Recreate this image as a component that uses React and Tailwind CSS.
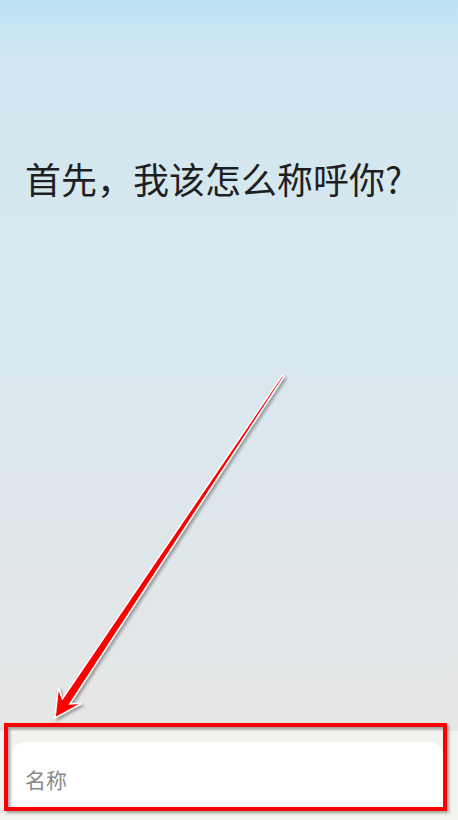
export default function App() {
  return (
    <div
      className="relative flex h-[820px] w-full flex-col overflow-hidden bg-[linear-gradient(180deg,#bce2f3_0%,#d2e7f0_8%,#d7e8ef_40%,#e0e6e9_70%,#e6e6e6_89%)]"
      style={{ fontFamily: '"Noto Sans CJK SC", "Noto Sans", sans-serif' }}
    >
      <div className="flex-1 px-[25px] pt-[150px]">
        <h1 className="text-[36px] font-normal leading-[56px] text-[#1f1f1f]">
          首先，我该怎么称呼你?
        </h1>
      </div>

      <div className="h-[89px] bg-[#f4f2ee] pl-3 pr-[15px] pt-[11px]">
        <div className="flex h-[66px] items-center rounded-t-[14px] bg-white px-[13px] pt-[10px]">
          <input
            type="text"
            placeholder="名称"
            className="w-full bg-transparent text-[21px] text-[#333] outline-none placeholder:text-[#8a8a8a]"
          />
        </div>
      </div>

      {/* annotation overlay: arrow + highlight box */}
      <svg
        className="pointer-events-none absolute inset-0"
        width="458"
        height="820"
        viewBox="0 0 458 820"
      >
        <defs>
          <filter id="shadow" x="-20%" y="-20%" width="140%" height="140%">
            <feDropShadow dx="2" dy="2" stdDeviation="1.5" floodColor="#000" floodOpacity="0.35" />
          </filter>
        </defs>
        <polygon
          points="282.2,375.4 62.4,698.9 58.3,687.8 55,718 81.6,703.3 69.8,703.9 283.8,376.6"
          fill="#ff0000"
          stroke="#ffffff"
          strokeWidth="1.5"
          strokeLinejoin="miter"
          filter="url(#shadow)"
        />
        <rect
          x="6"
          y="725"
          width="439"
          height="84"
          fill="none"
          stroke="#ff0000"
          strokeWidth="4"
          filter="url(#shadow)"
        />
      </svg>
    </div>
  );
}
